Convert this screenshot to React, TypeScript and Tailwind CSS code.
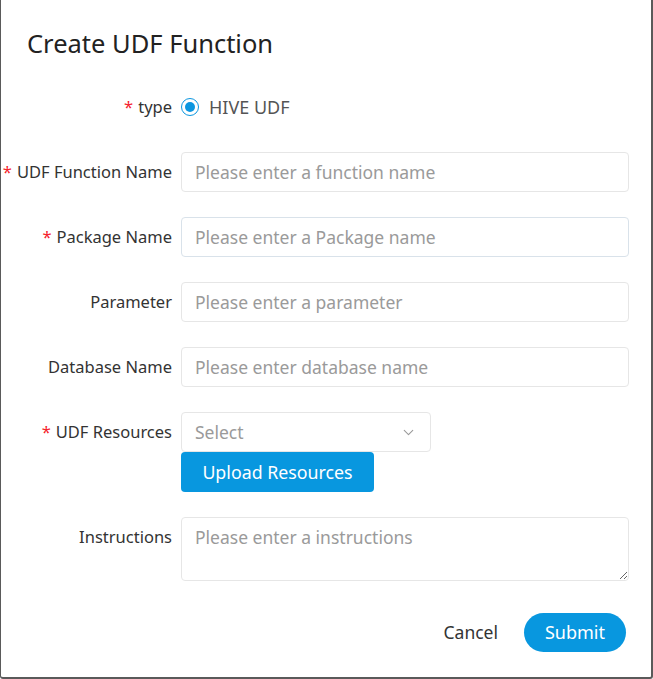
import React from 'react';
import { ChevronDown } from 'lucide-react';

const font = { fontFamily: '"Noto Sans", "Open Sans", sans-serif' };

const Label = ({ text, required }: { text: string; required?: boolean }) => (
  <div className="w-[180px] shrink-0 whitespace-nowrap pr-[9px] text-right text-[16.5px] leading-[40px] text-[#333]">
    {required && <span className="mr-[5px] text-[#f5222d]">*</span>}
    {text}
  </div>
);

const TextInput = ({ placeholder, blue }: { placeholder: string; blue?: boolean }) => (
  <input
    placeholder={placeholder}
    className={`h-[40px] w-[448px] rounded-[4px] border bg-white px-[13px] text-[17.5px] text-[#333] outline-none placeholder:text-[#9a9a9a] ${
      blue ? 'border-[#d9e2ea]' : 'border-[#e6e6e6]'
    }`}
  />
);

export default function App() {
  const fields = [
    { label: 'UDF Function Name', required: true, placeholder: 'Please enter a function name' },
    { label: 'Package Name', required: true, placeholder: 'Please enter a Package name', blue: true },
    { label: 'Parameter', placeholder: 'Please enter a parameter' },
    { label: 'Database Name', placeholder: 'Please enter database name' },
  ];

  return (
    <div
      className="relative h-[679px] w-[653px] overflow-hidden rounded-b-[3px] border-b-2 border-l border-r-2 border-[#5a5a5a] bg-white"
      style={font}
    >
      <h1 className="pl-[26px] pt-[27px] text-[25.5px] leading-[32px] text-[#222]">Create UDF Function</h1>

      <div className="mt-[28px]">
        {/* type */}
        <div className="mb-[25px] flex h-[40px] items-center">
          <Label text="type" required />
          <div className="flex items-center">
            <span className="flex h-[18px] w-[18px] items-center justify-center rounded-full border border-[#0b96e0] bg-white">
              <span className="h-[10px] w-[10px] rounded-full bg-[#0b96e0]" />
            </span>
            <span className="ml-[10px] text-[18px] text-[#555]">HIVE UDF</span>
          </div>
        </div>

        {fields.map((f, i) => (
          <div key={i} className="mb-[25px] flex items-center">
            <Label text={f.label} required={f.required} />
            <TextInput placeholder={f.placeholder} blue={f.blue} />
          </div>
        ))}

        {/* resources */}
        <div className="mb-[25px] flex items-start">
          <Label text="UDF Resources" required />
          <div className="flex flex-col">
            <div className="flex h-[40px] w-[250px] items-center justify-between rounded-[4px] border border-[#e6e6e6] bg-white pl-[13px] pr-[13px]">
              <span className="text-[17.5px] text-[#9a9a9a]">Select</span>
              <ChevronDown className="h-[17px] w-[17px] text-[#9a9a9a]" strokeWidth={1.5} />
            </div>
            <button className="h-[40px] w-[193px] rounded-[4px] bg-[#0897df] text-[17.8px] text-white">
              Upload Resources
            </button>
          </div>
        </div>

        {/* instructions */}
        <div className="flex items-start">
          <Label text="Instructions" />
          <textarea
            placeholder="Please enter a instructions"
            className="h-[64px] w-[448px] rounded-[4px] border border-[#e6e6e6] px-[13px] py-[6px] text-[17.5px] leading-[26px] text-[#333] outline-none placeholder:text-[#9a9a9a]"
          />
        </div>
      </div>

      <div className="mt-[32px] flex items-center justify-end pr-[25px]">
        <button className="mr-[26px] text-[17.5px] text-[#333]">Cancel</button>
        <button className="h-[39px] w-[102px] rounded-full bg-[#0897df] text-[18px] text-white">Submit</button>
      </div>
    </div>
  );
}
